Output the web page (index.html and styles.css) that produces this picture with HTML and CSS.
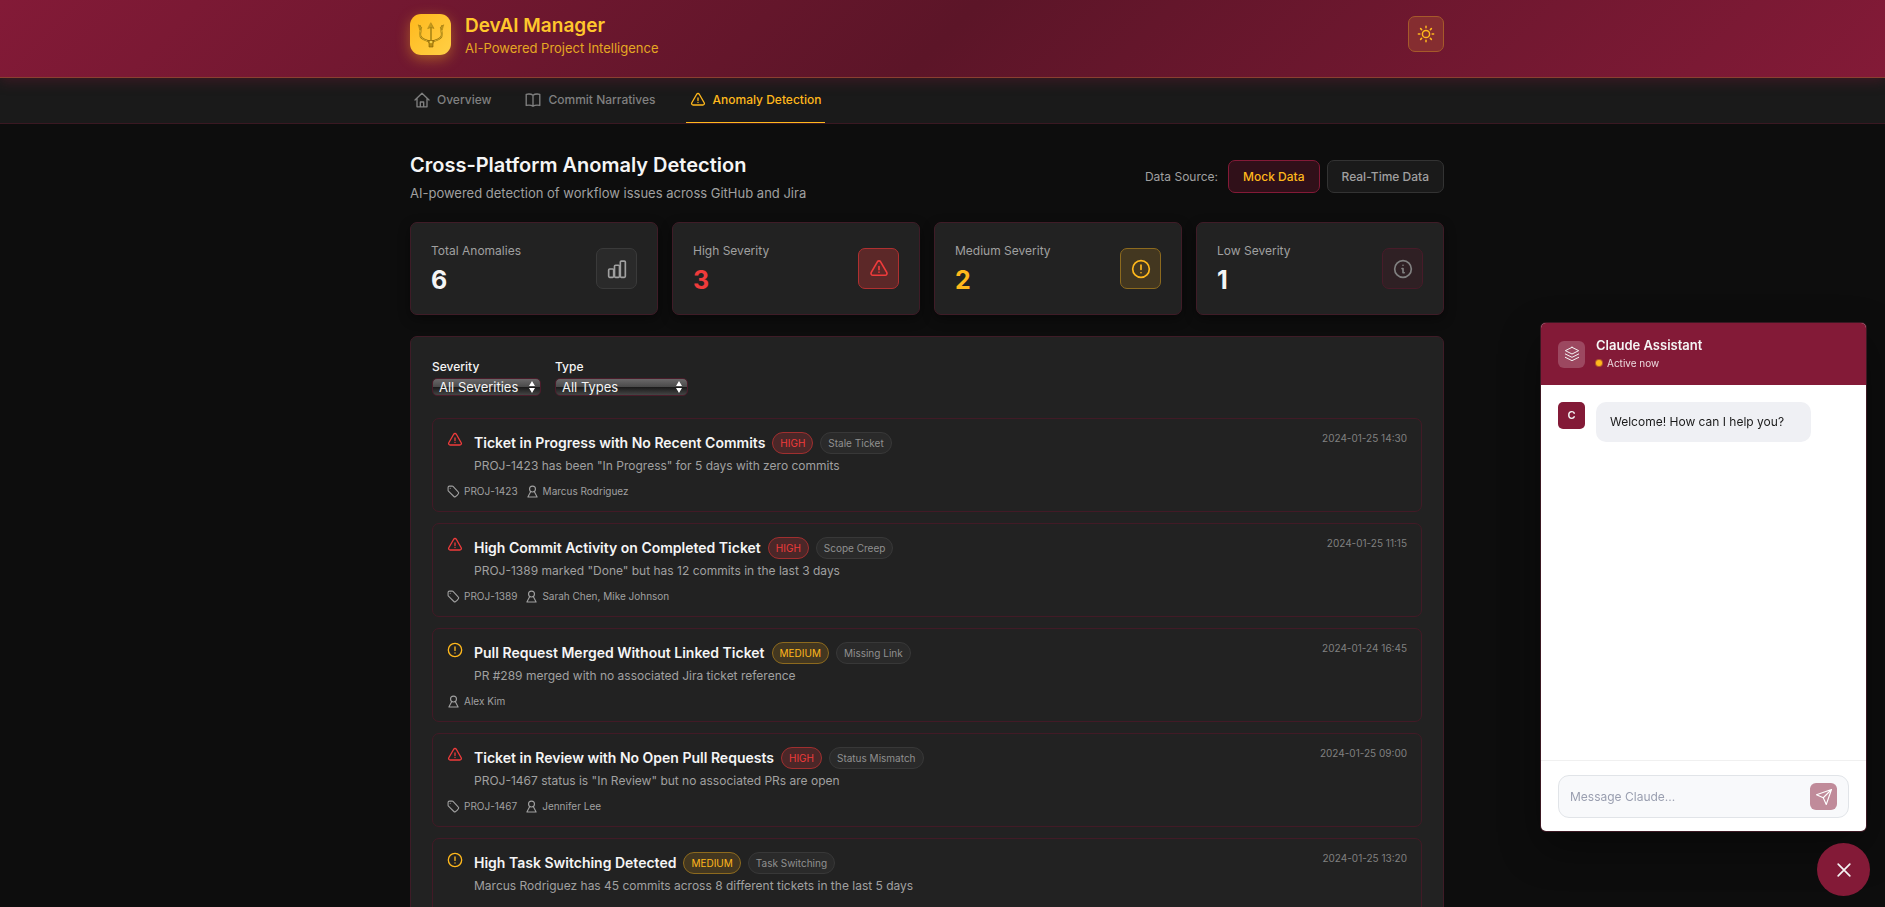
FILE: index.html
```html
<!DOCTYPE html>
<html lang="en">
<head>
<meta charset="UTF-8" />
<meta name="viewport" content="width=device-width, initial-scale=1.0"/>
<title>DevAI Manager</title>
<link rel="stylesheet" href="styles.css">
</head>
<body>
  <!-- Shared icons -->
  <svg class="sprite" aria-hidden="true">
    <symbol id="i-alert" viewBox="0 0 24 24"><path d="M12 9v3.75M12 15.75h.01M2.7 16.13c-.87 1.5.21 3.37 1.94 3.37h14.72c1.73 0 2.81-1.87 1.94-3.37L13.95 3.38c-.87-1.5-3.03-1.5-3.9 0L2.7 16.13z"/></symbol>
    <symbol id="i-circle" viewBox="0 0 24 24"><circle cx="12" cy="12" r="10"/><path d="M12 7.2v5.4M12 16.5h.01"/></symbol>
    <symbol id="i-tag" viewBox="0 0 24 24"><path d="M9.57 2H4.5A2.5 2.5 0 0 0 2 4.5v5.07c0 .6.24 1.17.66 1.59l10.08 10.08c.7.7 1.78.87 2.61.33a19 19 0 0 0 5.92-5.92c.54-.83.37-1.91-.33-2.61L11.16 2.66A2.25 2.25 0 0 0 9.57 2z"/><path d="M6 6h.01"/></symbol>
    <symbol id="i-user" viewBox="0 0 24 24"><circle cx="12" cy="7.5" r="5.5"/><path d="M8.5 12.5L3.500 22h17l-5-9.500"/></symbol>
  </svg>

  <header class="header">
    <div class="container header-row">
      <div class="brand">
        <div class="logo">
          <svg viewBox="0 0 28 28" width="28" height="28" fill="none" stroke-linecap="round" stroke-linejoin="round">
            <g stroke="#94700f" stroke-width="1.8">
              <path d="M14 6v14M3 5c2.5 3-1 7 .5 10.5C5 18.500 9 19.500 13 20.500M25 5c-2.500 3 1 7-.5 10.500C23 18.500 19 19.500 15 20.500"/>
            </g>
            <g stroke="#e3b92c" stroke-width=".8">
              <path d="M14 6v14M3 5c2.5 3-1 7 .5 10.5C5 18.500 9 19.500 13 20.500M25 5c-2.500 3 1 7-.5 10.500C23 18.500 19 19.500 15 20.500"/>
            </g>
            <path d="M14 2l3 5.5-3-1-3 1zM1.5 4l3.2 2.5-1.7 2zM26.5 4l-3.2 2.5 1.7 2z" fill="#c29a1c" stroke="#94700f" stroke-width=".5"/>
            <path d="M11 19.5h6l-1 3.5v3h-4v-3z" fill="#b98d12" stroke="#7d5c08" stroke-width=".6"/>
            <circle cx="14" cy="21" r="1.3" fill="#f3d04a"/>
          </svg>
        </div>
        <div>
          <h1 class="brand-name">DevAI Manager</h1>
          <p class="brand-sub">AI-Powered Project Intelligence</p>
        </div>
      </div>
      <button class="theme-btn" type="button" aria-label="Toggle theme">
        <svg class="icon" viewBox="0 0 24 24" width="18" height="18"><circle cx="12" cy="12" r="4.8"/><path d="M12 1.8v2M12 20.2v2M1.8 12h2M20.2 12h2M4.8 4.8l1.4 1.4M17.8 17.8l1.4 1.4M4.8 19.2l1.4-1.4M17.8 6.2l1.4-1.4"/></svg>
      </button>
    </div>
  </header>

  <nav class="nav">
    <div class="container nav-row">
      <a class="nav-link" href="#overview">
        <svg class="icon" viewBox="0 0 24 24" width="16" height="16"><path d="M1.5 12L12 1.8 22.5 12M4.5 9.5v12.7h15V9.5M9.5 22v-7h5v7"/></svg>
        Overview
      </a>
      <a class="nav-link" href="#commits">
        <svg class="icon" viewBox="0 0 24 24" width="16" height="16"><path d="M12 5C9.5 3 5.5 2.7 1.8 3.5v16.7C5.5 19.4 9.5 19.7 12 21.5c2.5-1.8 6.5-2.1 10.2-1.3V3.5C18.5 2.7 14.5 3 12 5zM12 5v16.5"/></svg>
        Commit Narratives
      </a>
      <a class="nav-link active" href="#anomalies">
        <svg class="icon" width="16" height="16"><use href="#i-alert"/></svg>
        Anomaly Detection
      </a>
    </div>
  </nav>

  <main class="main">
    <div class="container">
      <div class="page-head">
        <div>
          <h2 class="page-title">Cross-Platform Anomaly Detection</h2>
          <p class="page-sub">AI-powered detection of workflow issues across GitHub and Jira</p>
        </div>
        <div class="source">
          <span class="source-label">Data Source:</span>
          <button class="source-btn selected" type="button">Mock Data</button>
          <button class="source-btn" type="button">Real-Time Data</button>
        </div>
      </div>

      <section class="stats">
        <div class="stat">
          <div>
            <p class="stat-label">Total Anomalies</p>
            <p class="stat-value">6</p>
          </div>
          <div class="stat-icon">
            <svg class="icon" viewBox="0 0 24 24" width="20" height="20"><rect x="2" y="12" width="6" height="10" rx="1.2"/><rect x="9" y="7.5" width="6" height="14.5" rx="1.2"/><rect x="16" y="2.5" width="6" height="19.5" rx="1.2"/></svg>
          </div>
        </div>
        <div class="stat">
          <div>
            <p class="stat-label">High Severity</p>
            <p class="stat-value red">3</p>
          </div>
          <div class="stat-icon red">
            <svg class="icon" width="20" height="20"><use href="#i-alert"/></svg>
          </div>
        </div>
        <div class="stat">
          <div>
            <p class="stat-label">Medium Severity</p>
            <p class="stat-value gold">2</p>
          </div>
          <div class="stat-icon gold">
            <svg class="icon" width="20" height="20"><use href="#i-circle"/></svg>
          </div>
        </div>
        <div class="stat">
          <div>
            <p class="stat-label">Low Severity</p>
            <p class="stat-value">1</p>
          </div>
          <div class="stat-icon wine">
            <svg class="icon" viewBox="0 0 24 24" width="20" height="20"><circle cx="12" cy="12" r="10"/><path d="M10.8 11.5H12v5h1.5M12 7.5h.01"/></svg>
          </div>
        </div>
      </section>

      <section class="panel">
        <div class="filters">
          <div class="filter">
            <label for="severity">Severity</label>
            <select id="severity" class="severity">
              <option>All Severities</option>
              <option>High</option>
              <option>Medium</option>
              <option>Low</option>
            </select>
          </div>
          <div class="filter">
            <label for="type">Type</label>
            <select id="type" class="type">
              <option>All Types</option>
              <option>Stale Ticket</option>
              <option>Scope Creep</option>
              <option>Missing Link</option>
              <option>Status Mismatch</option>
              <option>Task Switching</option>
            </select>
          </div>
        </div>

        <div class="list">
          <article class="item">
            <svg class="icon item-icon red" width="16" height="16"><use href="#i-alert"/></svg>
            <div class="item-body">
              <div class="item-head">
                <h3>Ticket in Progress with No Recent Commits</h3>
                <span class="badge red">HIGH</span>
                <span class="badge">Stale Ticket</span>
              </div>
              <p class="item-text">PROJ-1423 has been "In Progress" for 5 days with zero commits</p>
            </div>
            <time class="item-time">2024-01-25 14:30</time>
            <div class="item-meta">
              <span><svg class="icon" width="13" height="13"><use href="#i-tag"/></svg>PROJ-1423</span>
              <span><svg class="icon" width="13" height="13"><use href="#i-user"/></svg>Marcus Rodriguez</span>
            </div>
          </article>

          <article class="item">
            <svg class="icon item-icon red" width="16" height="16"><use href="#i-alert"/></svg>
            <div class="item-body">
              <div class="item-head">
                <h3>High Commit Activity on Completed Ticket</h3>
                <span class="badge red">HIGH</span>
                <span class="badge">Scope Creep</span>
              </div>
              <p class="item-text">PROJ-1389 marked "Done" but has 12 commits in the last 3 days</p>
            </div>
            <time class="item-time">2024-01-25 11:15</time>
            <div class="item-meta">
              <span><svg class="icon" width="13" height="13"><use href="#i-tag"/></svg>PROJ-1389</span>
              <span><svg class="icon" width="13" height="13"><use href="#i-user"/></svg>Sarah Chen, Mike Johnson</span>
            </div>
          </article>

          <article class="item">
            <svg class="icon item-icon gold" width="16" height="16"><use href="#i-circle"/></svg>
            <div class="item-body">
              <div class="item-head">
                <h3>Pull Request Merged Without Linked Ticket</h3>
                <span class="badge gold">MEDIUM</span>
                <span class="badge">Missing Link</span>
              </div>
              <p class="item-text">PR #289 merged with no associated Jira ticket reference</p>
            </div>
            <time class="item-time">2024-01-24 16:45</time>
            <div class="item-meta">
              <span><svg class="icon" width="13" height="13"><use href="#i-user"/></svg>Alex Kim</span>
            </div>
          </article>

          <article class="item">
            <svg class="icon item-icon red" width="16" height="16"><use href="#i-alert"/></svg>
            <div class="item-body">
              <div class="item-head">
                <h3>Ticket in Review with No Open Pull Requests</h3>
                <span class="badge red">HIGH</span>
                <span class="badge">Status Mismatch</span>
              </div>
              <p class="item-text">PROJ-1467 status is "In Review" but no associated PRs are open</p>
            </div>
            <time class="item-time">2024-01-25 09:00</time>
            <div class="item-meta">
              <span><svg class="icon" width="13" height="13"><use href="#i-tag"/></svg>PROJ-1467</span>
              <span><svg class="icon" width="13" height="13"><use href="#i-user"/></svg>Jennifer Lee</span>
            </div>
          </article>

          <article class="item">
            <svg class="icon item-icon gold" width="16" height="16"><use href="#i-circle"/></svg>
            <div class="item-body">
              <div class="item-head">
                <h3>High Task Switching Detected</h3>
                <span class="badge gold">MEDIUM</span>
                <span class="badge">Task Switching</span>
              </div>
              <p class="item-text">Marcus Rodriguez has 45 commits across 8 different tickets in the last 5 days</p>
            </div>
            <time class="item-time">2024-01-25 13:20</time>
          </article>
        </div>
      </section>
    </div>
  </main>

  <aside class="chat">
    <div class="chat-head">
      <div class="chat-logo">
        <svg class="icon thin" viewBox="0 0 24 24" width="16" height="16"><path d="M12 2L2 7l10 5 10-5-10-5zM2 12l10 5 10-5M2 17l10 5 10-5"/></svg>
      </div>
      <div>
        <p class="chat-name">Claude Assistant</p>
        <p class="chat-status"><span class="dot"></span>Active now</p>
      </div>
    </div>
    <div class="chat-body">
      <div class="avatar">C</div>
      <p class="bubble">Welcome! How can I help you?</p>
    </div>
    <form class="chat-form">
      <div class="chat-box">
        <input type="text" aria-label="Message Claude" placeholder="Message Claude...">
        <button class="send" type="button" aria-label="Send">
          <svg class="icon thin" viewBox="0 0 24 24" width="18" height="18"><path d="M22 2L11 13M22 2l-7 20-4-9-9-4 20-7z"/></svg>
        </button>
      </div>
    </form>
  </aside>
  <button class="fab" type="button" aria-label="Close chat">
    <svg class="icon" viewBox="0 0 24 24" width="20" height="20"><path d="M5 5l14 14M19 5L5 19"/></svg>
  </button>
</body>
</html>
```
FILE: styles.css
```css
* {
  box-sizing: border-box;
}
html {
  scrollbar-width: none;
}
body {
  margin: 0;
  background: #0d0d0d;
  color: #f5f5f5;
  font-family: Inter, "Liberation Sans", sans-serif;
  font-size: 12px;
  line-height: 18px;
}
h1, h2, h3, p {
  margin: 0;
}
button, input, select {
  font-family: inherit;
}
button {
  cursor: pointer;
}
.sprite {
  display: none;
}
.icon {
  flex: none;
  fill: none;
  stroke: currentColor;
  stroke-width: 2;
  stroke-linecap: round;
  stroke-linejoin: round;
}
.icon.thin {
  stroke-width: 1.5;
}
.container {
  width: calc(100% - 60px);
  max-width: 1034px;
  margin: 0 auto;
}
.header, .nav, .main {
  padding-right: 31px;
}

/* Header */
.header {
  position: relative;
  background: linear-gradient(135deg, #831a37 0%, #5c1528 50%, #831a37 100%);
  border-bottom: 1px solid #8a4030;
  box-shadow: 0 4px 12px rgba(131, 26, 55, 0.3);
}
.header-row {
  display: flex;
  align-items: flex-start;
  justify-content: space-between;
  padding: 13px 0 20px;
}
.brand {
  display: flex;
  gap: 14px;
}
.logo {
  display: flex;
  align-items: center;
  justify-content: center;
  width: 41px;
  height: 41px;
  margin-top: 1px;
  border-radius: 11px;
  background: linear-gradient(135deg, #ffb81c, #ffd046);
  box-shadow: 0 4px 14px rgba(255, 184, 28, 0.4);
}
.brand-name {
  color: #ffc72c;
  font-size: 19px;
  font-weight: 600;
  line-height: 26px;
}
.brand-sub {
  color: #e5a823;
  font-size: 13px;
}
.theme-btn {
  display: flex;
  align-items: center;
  justify-content: center;
  width: 36px;
  height: 36px;
  margin-top: 3px;
  border: 1px solid #a65a2a;
  border-radius: 7px;
  background: #852d30;
  color: #ffb81c;
}

/* Navigation */
.nav {
  background: #1a1a1a;
  border-bottom: 1px solid #3a1822;
}
.nav-row {
  display: flex;
  gap: 26px;
}
.nav-link {
  display: flex;
  align-items: center;
  gap: 7px;
  height: 45px;
  padding: 0 4px;
  border-bottom: 1px solid transparent;
  color: #808080;
  font-weight: 500;
  text-decoration: none;
}
.nav-link.active {
  border-color: #ffb81c;
  color: #ffb81c;
}

/* Page heading */
.main {
  padding-top: 27px;
}
.page-head {
  display: flex;
  align-items: center;
  justify-content: space-between;
  margin-bottom: 20px;
}
.page-title {
  font-size: 20px;
  font-weight: 600;
  line-height: 28px;
}
.page-sub {
  margin-top: 5px;
  color: #a0a0a0;
  font-size: 13px;
}
.source {
  display: flex;
  align-items: center;
  gap: 7px;
}
.source-label {
  margin-right: 3px;
  color: #a0a0a0;
}
.source-btn {
  height: 33px;
  padding: 0 14px;
  border: 1px solid #333;
  border-radius: 7px;
  background: #1a1a1a;
  color: #a0a0a0;
  font-size: 12px;
  font-weight: 500;
}
.source-btn.selected {
  border-color: #831a37;
  background: #301019;
  color: #ffb81c;
}

/* Stat cards */
.stats {
  display: grid;
  grid-template-columns: repeat(4, 1fr);
  gap: 14px;
  margin-bottom: 21px;
}
.stat {
  display: flex;
  align-items: center;
  justify-content: space-between;
  height: 93px;
  padding: 0 20px;
  border: 1px solid #3f1c27;
  border-radius: 7px;
  background: #222;
  box-shadow: 0 4px 12px rgba(0, 0, 0, 0.4);
}
.stat-label {
  color: #a0a0a0;
}
.stat-value {
  margin-top: 4px;
  font-size: 25px;
  font-weight: 700;
  line-height: 32px;
}
.stat-value.red {
  color: #ef3b3b;
}
.stat-value.gold {
  color: #ffb81c;
}
.stat-icon {
  display: flex;
  align-items: center;
  justify-content: center;
  width: 41px;
  height: 41px;
  border: 1px solid #3a3a3a;
  border-radius: 7px;
  background: #2a2a2a;
  color: #a0a0a0;
}
.stat-icon.red {
  border-color: #b03030;
  background: #5c2828;
  color: #ef3b3b;
}
.stat-icon.gold {
  border-color: #8d6a1e;
  background: #433720;
  color: #ffb81c;
}
.stat-icon.wine {
  border-color: #481b29;
  background: #2f2024;
  color: #808080;
}

/* Anomaly list */
.panel {
  padding: 21px;
  border: 1px solid #3f1c27;
  border-radius: 7px;
  background: #222;
}
.filters {
  display: flex;
  gap: 14px;
  margin-bottom: 22px;
}
.filter {
  display: flex;
  flex-direction: column;
  gap: 2px;
}
.filter label {
  font-weight: 500;
}
.filter select {
  appearance: none;
  height: 18px;
  padding: 0 6px;
  border: 1px solid #4a1c2a;
  border-radius: 5px;
  background:
    url("data:image/svg+xml,%3Csvg xmlns='http://www.w3.org/2000/svg' width='6' height='12'%3E%3Cpath d='M3 0l3 5H0zM3 12l3-5H0z' fill='white'/%3E%3C/svg%3E") no-repeat right 5px center,
    linear-gradient(#6e6c6d, #4b4b4b 48%, #1b1b1b 52%, #4a4a4a) border-box;
  color: #f5f5f5;
  font-size: 13px;
  line-height: 16px;
}
.filter .severity {
  width: 109px;
}
.filter .type {
  width: 133px;
}
.list {
  display: flex;
  flex-direction: column;
  gap: 11px;
}
.item {
  display: grid;
  grid-template-columns: 16px 1fr auto;
  grid-template-rows: 43px auto;
  column-gap: 11px;
  row-gap: 7px;
  height: 94px;
  padding: 13px 14px;
  border: 1px solid #421a26;
  border-radius: 7px;
}
.item-icon.red {
  color: #ef3b3b;
}
.item-icon.gold {
  color: #ffb81c;
}
.item-head {
  display: flex;
  align-items: center;
  gap: 7px;
}
.item-head h3 {
  font-size: 14px;
  font-weight: 600;
}
.badge {
  padding: 0 7px;
  border: 1px solid #383838;
  border-radius: 11px;
  background: #2a2a2a;
  color: #909090;
  font-size: 10px;
  line-height: 20px;
}
.badge.red {
  border-color: #a02f2f;
  background: #4b2728;
  color: #ef3b3b;
}
.badge.gold {
  border-color: #8d6a1e;
  background: #433720;
  color: #ffb81c;
}
.item-text {
  margin-top: 3px;
  color: #a0a0a0;
}
.item-time {
  color: #808080;
  font-size: 10px;
  line-height: 12px;
}
.item-meta {
  display: flex;
  grid-column: 1 / -1;
  gap: 8px;
  color: #a0a0a0;
  font-size: 10px;
}
.item-meta span {
  display: flex;
  align-items: center;
  gap: 4px;
}

/* Chat widget */
.chat {
  position: fixed;
  right: 19px;
  bottom: 76px;
  display: flex;
  flex-direction: column;
  width: 325px;
  height: 508px;
  overflow: hidden;
  border-radius: 5px;
  background: #fff;
  box-shadow: 0 0 0 1px #3a1822, 0 16px 40px rgba(0, 0, 0, 0.4);
}
.chat-head {
  display: flex;
  align-items: center;
  gap: 11px;
  height: 62px;
  padding: 0 17px;
  background: #831a37;
}
.chat-logo {
  display: flex;
  align-items: center;
  justify-content: center;
  width: 27px;
  height: 27px;
  border-radius: 6px;
  background: #9c4860;
}
.chat-name {
  font-size: 13px;
  font-weight: 600;
}
.chat-status {
  display: flex;
  align-items: center;
  gap: 5px;
  color: #ecd9de;
  font-size: 10px;
}
.dot {
  width: 6px;
  height: 6px;
  border-radius: 50%;
  background: #ffb81c;
  box-shadow: 0 0 0 1px #b35c2b;
}
.chat-body {
  display: flex;
  flex: 1;
  align-items: flex-start;
  gap: 11px;
  padding: 17px;
}
.avatar {
  width: 27px;
  height: 27px;
  border-radius: 5px;
  background: #831a37;
  font-size: 11px;
  font-weight: 600;
  line-height: 27px;
  text-align: center;
}
.bubble {
  width: 215px;
  padding: 11px 14px;
  border-radius: 10px;
  background: #eff0f4;
  color: #1a1a1a;
}
.chat-form {
  padding: 14px 17px 13px;
  border-top: 1px solid #f0f0f0;
}
.chat-box {
  display: flex;
  align-items: center;
  height: 43px;
  padding: 0 11px;
  border: 1px solid #e1e4e8;
  border-radius: 11px;
  background: #f8f9fb;
}
.chat-box input {
  flex: 1;
  min-width: 0;
  padding: 0;
  border: 0;
  outline: 0;
  background: none;
  font-size: 12px;
}
.chat-box input::placeholder {
  color: #9a9fb0;
}
.send {
  display: flex;
  align-items: center;
  justify-content: center;
  width: 27px;
  height: 27px;
  padding: 0;
  border: 0;
  border-radius: 6px;
  background: #c08b9a;
  color: #fff;
}
.fab {
  position: fixed;
  right: 15px;
  bottom: 11px;
  display: flex;
  align-items: center;
  justify-content: center;
  width: 53px;
  height: 53px;
  border: 0;
  border-radius: 50%;
  background: #831a37;
  color: #f5f5f5;
}
```
